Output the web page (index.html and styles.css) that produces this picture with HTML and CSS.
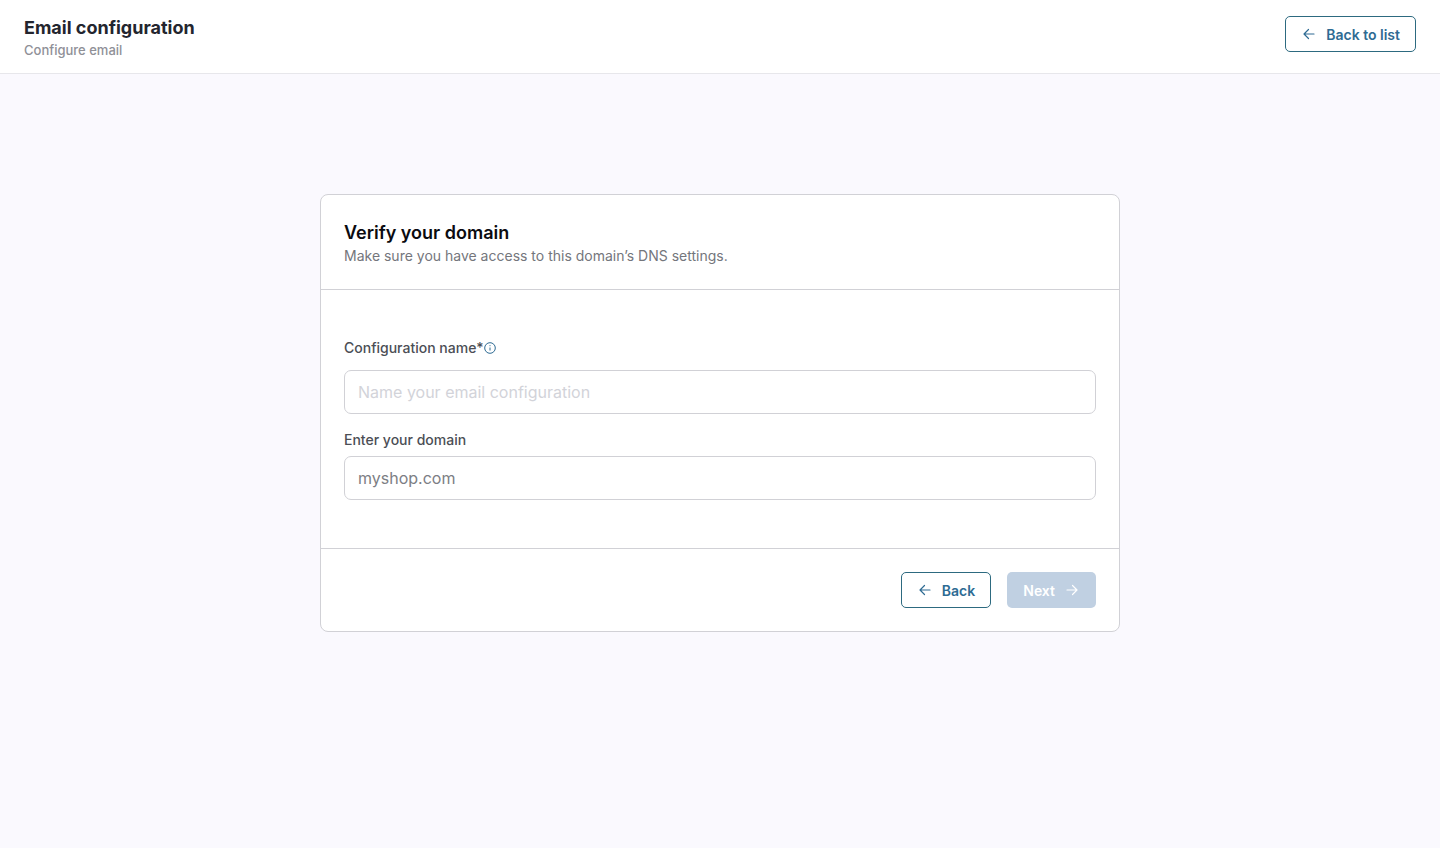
FILE: index.html
```html
<!DOCTYPE html>
<html lang="en">
<head>
  <meta charset="UTF-8" />
  <meta name="viewport" content="width=device-width, initial-scale=1" />
  <title>Email configuration</title>
  <link rel="stylesheet" href="styles.css">
</head>
<body>

  <header class="page-header">
    <div>
      <h1>Email configuration</h1>
      <p>Configure email</p>
    </div>
    <button type="button" class="btn btn-outline">
      <svg class="icon" viewBox="0 0 16 16" aria-hidden="true"><path d="M13 8H3M7.500 3.500L3 8l4.500 4.500" /></svg>
      Back to list
    </button>
  </header>

  <main>
    <form class="card">
      <div class="card-header">
        <h2>Verify your domain</h2>
        <p>Make sure you have access to this domain’s DNS settings.</p>
      </div>

      <div class="card-body">
        <div class="field field-name">
          <div class="label-row">
            <label for="configName">Configuration name*</label>
            <svg class="info-icon" viewBox="0 0 12 12" aria-hidden="true">
              <circle cx="6" cy="6" r="5.300" />
              <path d="M6 5.500v3M6 3.200v1" />
            </svg>
          </div>
          <input type="text" id="configName" placeholder="Name your email configuration">
        </div>
        <div class="field field-domain">
          <label for="domain">Enter your domain</label>
          <input type="text" id="domain" placeholder="myshop.com">
        </div>
      </div>

      <div class="card-footer">
        <button type="button" class="btn btn-outline">
          <svg class="icon" viewBox="0 0 16 16" aria-hidden="true"><path d="M13 8H3M7.500 3.500L3 8l4.500 4.500" /></svg>
          Back
        </button>
        <button type="submit" class="btn btn-primary" disabled>
          Next
          <svg class="icon" viewBox="0 0 16 16" aria-hidden="true"><path d="M3 8h10M8.500 3.500L13 8l-4.500 4.500" /></svg>
        </button>
      </div>
    </form>
  </main>

</body>
</html>
```

FILE: styles.css
```css
:root {
  --primary: #2e6b93;
  --primary-border: #2d6a80;
  --primary-disabled: #c0d0e2;
  --border: #d1d1d6;
  --bg: #faf9fe;
  --label: #4b4e55;
  --muted: #74767c;
}
* {
  box-sizing: border-box;
}
body {
  margin: 0;
  font-family: Inter, sans-serif;
  font-size: 14px;
  line-height: 20px;
  background-color: var(--bg);
  color: #23252e;
}
h1, h2, p {
  margin: 0;
}
.page-header {
  display: flex;
  justify-content: space-between;
  align-items: flex-start;
  padding: 16px 24px 13px;
  background: white;
  border-bottom: 1px solid #e7e7eb;
}
.page-header h1 {
  font-size: 18px;
  line-height: 24px;
  font-weight: 700;
}
.page-header p {
  font-size: 13px;
  font-weight: 500;
  color: #8f9097;
}
.btn {
  display: inline-flex;
  align-items: center;
  gap: 9px;
  height: 36px;
  padding: 0 15px;
  border: 1px solid transparent;
  border-radius: 5px;
  font-family: inherit;
  font-size: 14px;
  font-weight: 600;
  cursor: pointer;
}
.btn-outline {
  background: white;
  border-color: var(--primary-border);
  color: var(--primary);
}
.btn-primary {
  background: var(--primary-disabled);
  color: white;
}
.btn-primary:disabled {
  cursor: default;
}
.icon {
  width: 16px;
  height: 16px;
  fill: none;
  stroke: currentColor;
  stroke-width: 1.2;
  stroke-linecap: round;
  stroke-linejoin: round;
}
main {
  padding: 120px 24px 24px;
}
.card {
  max-width: 800px;
  margin: 0 auto;
  background: white;
  border: 1px solid var(--border);
  border-radius: 8px;
}
.card-header {
  padding: 26px 23px 22px;
  border-bottom: 1px solid var(--border);
}
.card-header h2 {
  font-size: 18px;
  line-height: 24px;
  font-weight: 600;
  color: #0b0b10;
}
.card-header p {
  line-height: 22px;
  color: var(--muted);
}
.card-body {
  display: flex;
  flex-direction: column;
  gap: 16px;
  padding: 48px 23px;
}
.field {
  display: flex;
  flex-direction: column;
}
.field-name {
  gap: 12px;
}
.field-domain {
  gap: 6px;
}
.field label {
  font-weight: 500;
  color: var(--label);
}
.label-row {
  display: flex;
  align-items: center;
}
.info-icon {
  width: 12px;
  height: 12px;
  fill: none;
  stroke: var(--primary);
  stroke-width: 1;
}
.field input {
  width: 100%;
  height: 44px;
  padding: 0 13px;
  background: white;
  border: 1px solid var(--border);
  border-radius: 7px;
  font-family: inherit;
  font-size: 16px;
  color: var(--label);
}
.field input::placeholder {
  color: #7c7e84;
  opacity: 1;
}
.field-name input::placeholder {
  color: #d2d3d9;
}
.card-footer {
  display: flex;
  justify-content: flex-end;
  gap: 16px;
  padding: 23px;
  border-top: 1px solid var(--border);
}
```
